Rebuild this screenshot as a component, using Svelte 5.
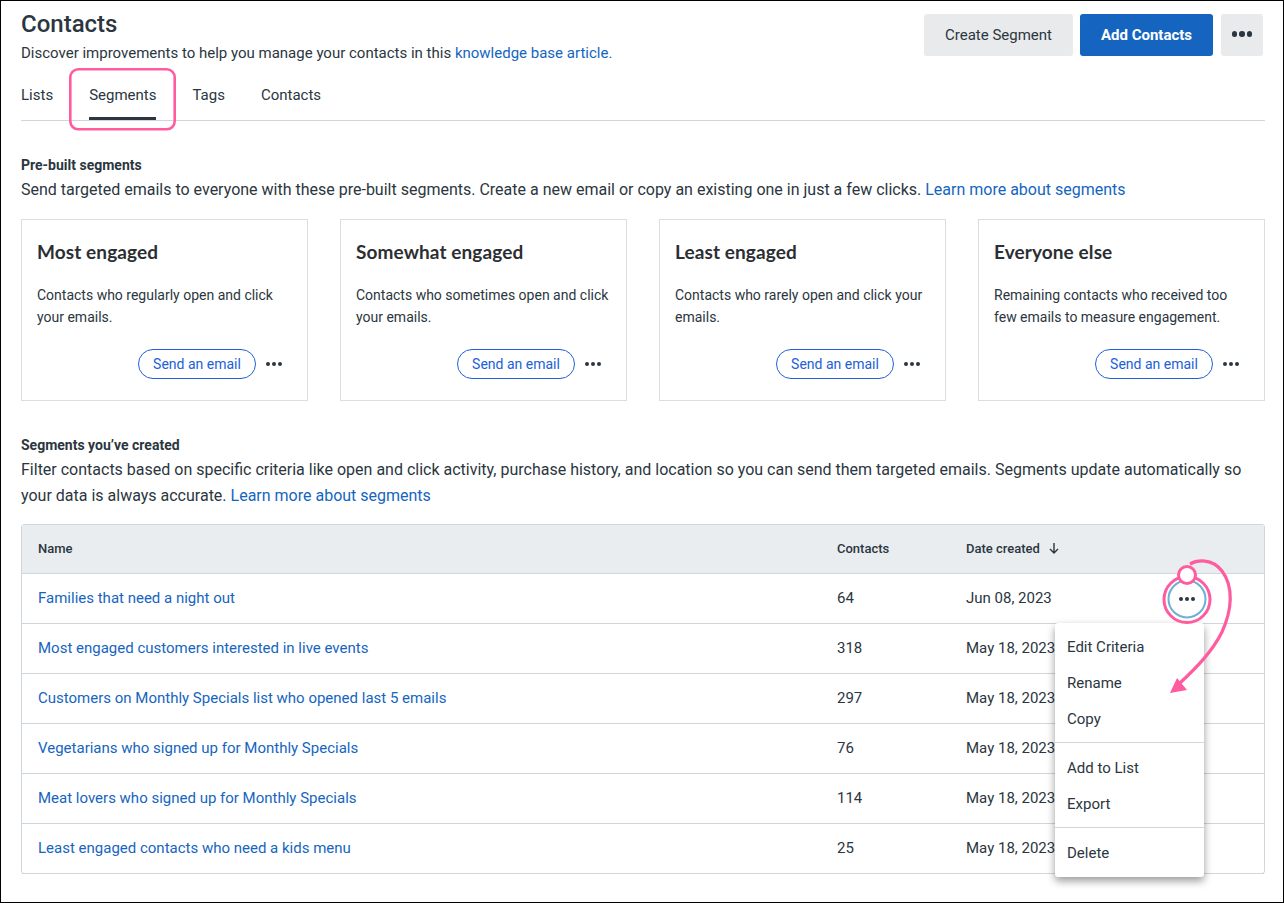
<script>
  const cards = [
    { t: 'Most engaged', d: 'Contacts who regularly open and click your emails.' },
    { t: 'Somewhat engaged', d: 'Contacts who sometimes open and click your emails.' },
    { t: 'Least engaged', d: 'Contacts who rarely open and click your emails.' },
    { t: 'Everyone else', d: 'Remaining contacts who received too few emails to measure engagement.' }
  ];
  const rows = [
    ['Families that need a night out', '64', 'Jun 08, 2023'],
    ['Most engaged customers interested in live events', '318', 'May 18, 2023'],
    ['Customers on Monthly Specials list who opened last 5 emails', '297', 'May 18, 2023'],
    ['Vegetarians who signed up for Monthly Specials', '76', 'May 18, 2023'],
    ['Meat lovers who signed up for Monthly Specials', '114', 'May 18, 2023'],
    ['Least engaged contacts who need a kids menu', '25', 'May 18, 2023']
  ];
  const tabs = ['Lists', 'Segments', 'Tags', 'Contacts'];
</script>

<div class="page">
  <header class="top">
    <div>
      <h1>Contacts</h1>
      <p class="sub">Discover improvements to help you manage your contacts in this <a href="#a">knowledge base article.</a></p>
    </div>
    <div class="actions">
      <button class="btn grey">Create Segment</button>
      <button class="btn blue">Add Contacts</button>
      <button class="btn grey more" aria-label="More"><span class="dots big"><i></i><i></i><i></i></span></button>
    </div>
  </header>

  <nav class="tabs">
    {#each tabs as tab}
      <span class="tab" class:active={tab === 'Segments'}>{tab}</span>
    {/each}
  </nav>

  <section class="pre">
    <h2>Pre-built segments</h2>
    <p class="txt">Send targeted emails to everyone with these pre-built segments. Create a new email or copy an existing one in just a few clicks. <a href="#a">Learn more about segments</a></p>
  </section>

  <div class="cards">
    {#each cards as c}
      <article class="card">
        <h3>{c.t}</h3>
        <p>{c.d}</p>
        <div class="card-foot">
          <button class="pill">Send an email</button>
          <span class="dots"><i></i><i></i><i></i></span>
        </div>
      </article>
    {/each}
  </div>

  <section class="created">
    <h2>Segments you’ve created</h2>
    <p class="txt">Filter contacts based on specific criteria like open and click activity, purchase history, and location so you can send them targeted emails. Segments update automatically so your data is always accurate. <a href="#a">Learn more about segments</a></p>
  </section>

  <div class="table">
    <div class="row head">
      <span>Name</span>
      <span>Contacts</span>
      <span class="date-head">Date created
        <svg width="12" height="12" viewBox="0 0 12 12" fill="none" stroke="#2b3640" stroke-width="1.4"><path d="M6 1v10M2 7l4 4 4-4"/></svg>
      </span>
      <span></span>
    </div>
    {#each rows as r, i}
      <div class="row">
        <a href="#a">{r[0]}</a>
        <span>{r[1]}</span>
        <span>{r[2]}</span>
        <span class="cell-more">
          {#if i === 0}<span class="dots"><i></i><i></i><i></i></span>{/if}
        </span>
      </div>
    {/each}

    <div class="menu">
      <div class="group">
        <span>Edit Criteria</span><span>Rename</span><span>Copy</span>
      </div>
      <div class="group">
        <span>Add to List</span><span>Export</span>
      </div>
      <div class="group">
        <span>Delete</span>
      </div>
    </div>
  </div>

  <svg class="overlay" width="1284" height="903" viewBox="0 0 1284 903" fill="none">
    <rect x="70.3" y="69.3" width="104.4" height="60" rx="8" stroke="#ff5c9f" stroke-width="2.6"/>
    <circle cx="1187" cy="599" r="18.5" stroke="#6bb0d6" stroke-width="2"/>
    <circle cx="1187" cy="599.5" r="23" stroke="#ff5c9f" stroke-width="3"/>
    <path d="M1190 564C1197 560 1212 558 1222 571C1234 587 1232 610 1222 632C1212 652 1196 668 1180 683" stroke="#ff5c9f" stroke-width="3.2"/>
    <path d="M1170 693L1177 678L1187 690Z" fill="#ff5c9f"/>
    <circle cx="1187" cy="575" r="8.5" fill="#fff" stroke="#ff5c9f" stroke-width="3"/>
  </svg>
</div>

<style>
  :global(body) { margin: 0; background: #fff; }
  .page {
    position: relative;
    width: 1284px;
    height: 903px;
    box-sizing: border-box;
    border: 1px solid #000;
    padding: 0 18px 0 20px;
    font-family: Roboto, "Liberation Sans", sans-serif;
    color: #2b3640;
    font-size: 15px;
    overflow: hidden;
  }
  a { color: #1565c0; text-decoration: none; }
  .top { display: flex; justify-content: space-between; align-items: flex-start; }
  h1 { margin: 8px 0 0; font-size: 24px; line-height: 30px; font-weight: 500; }
  .sub { margin: 3px 0 0; font-size: 15px; line-height: 22px; }
  .actions { display: flex; margin: 13px 2px 0 0; }
  .btn {
    height: 42px;
    border: 0;
    border-radius: 3px;
    font: 400 15px Roboto, sans-serif;
    padding: 0;
    display: flex;
    align-items: center;
    justify-content: center;
  }
  .grey { background: #e9eaec; color: #2b3640; width: 149px; }
  .blue { background: #1565c0; color: #fff; font-weight: 700; width: 133px; margin-left: 7px; }
  .more { width: 42px; margin-left: 8px; padding-bottom: 2px; }
  .dots { display: inline-flex; gap: 2px; }
  .dots i { width: 4px; height: 4px; border-radius: 50%; background: #2b3640; }
  .dots.big { gap: 2px; }
  .dots.big i { width: 5.6px; height: 5.6px; }
  .tabs {
    display: flex;
    gap: 36px;
    margin-top: 16px;
    height: 40px;
    border-bottom: 1px solid #cfd6dc;
    box-sizing: content-box;
  }
  .tab { line-height: 20px; padding-top: 5px; height: 40px; box-sizing: border-box; }
  .tab.active { box-shadow: inset 0 -3px 0 #2b3640; }
  h2 { margin: 0; font-size: 14px; line-height: 20px; font-weight: 700; color: #2b3640; }
  .pre { margin-top: 34px; }
  .txt { margin: 2px 0 0; font-size: 16px; line-height: 26px; }
  .cards { display: grid; grid-template-columns: repeat(4, 287px); gap: 32px; margin-top: 16px; }
  .card {
    height: 182px;
    box-sizing: border-box;
    border: 1px solid #ddd;
    padding: 20px 25px 0 15px;
    display: flex;
    flex-direction: column;
  }
  h3 { margin: 0; font: 700 19px/24px Lato, sans-serif; color: #2b2f33; letter-spacing: 0.1px; }
  .card p { margin: 20px -9px 0 0; font-size: 14px; line-height: 22px; height: 44px; }
  .card-foot { display: flex; align-items: center; justify-content: flex-end; margin-top: 21px; gap: 10px; }
  .pill {
    height: 30px;
    width: 118px;
    border: 1px solid #2160d8;
    border-radius: 15px;
    background: #fff;
    color: #2160d8;
    font: 400 14px Roboto, sans-serif;
    padding: 0;
  }
  .created { margin-top: 34px; }
  .table {
    position: relative;
    margin-top: 15px;
    border: 1px solid #cfd6dc;
    border-radius: 3px;
    height: 350px;
    box-sizing: border-box;
    font-size: 15px;
  }
  .row {
    display: grid;
    grid-template-columns: 799px 129px 1fr 100px;
    padding: 0 0 2px 16px;
    height: 50px;
    align-items: center;
    border-bottom: 1px solid #cfd6dc;
    box-sizing: border-box;
  }
  .row:last-of-type { border-bottom: 0; }
  .head { background: #e9edf0; height: 49px; font-size: 13px; font-weight: 500; }
  .date-head { display: inline-flex; align-items: center; gap: 8px; }
  .cell-more { display: flex; justify-content: center; padding: 2px 54px 0 0; }
  .menu {
    position: absolute;
    left: 1033px;
    top: 98px;
    width: 149px;
    height: 254px;
    background: #fff;
    border-radius: 3px;
    box-shadow: 0 4px 8px rgba(0, 0, 0, 0.4);
    box-sizing: border-box;
    padding-top: 6px;
  }
  .group { display: flex; flex-direction: column; padding: 0 0 5px; border-bottom: 1px solid #cfd6dc; margin-bottom: 7px; }
  .group:last-child { border-bottom: 0; }
  .group span { height: 36px; line-height: 36px; padding-left: 12px; }
  .overlay { position: absolute; left: -1px; top: -1px; pointer-events: none; }
</style>
